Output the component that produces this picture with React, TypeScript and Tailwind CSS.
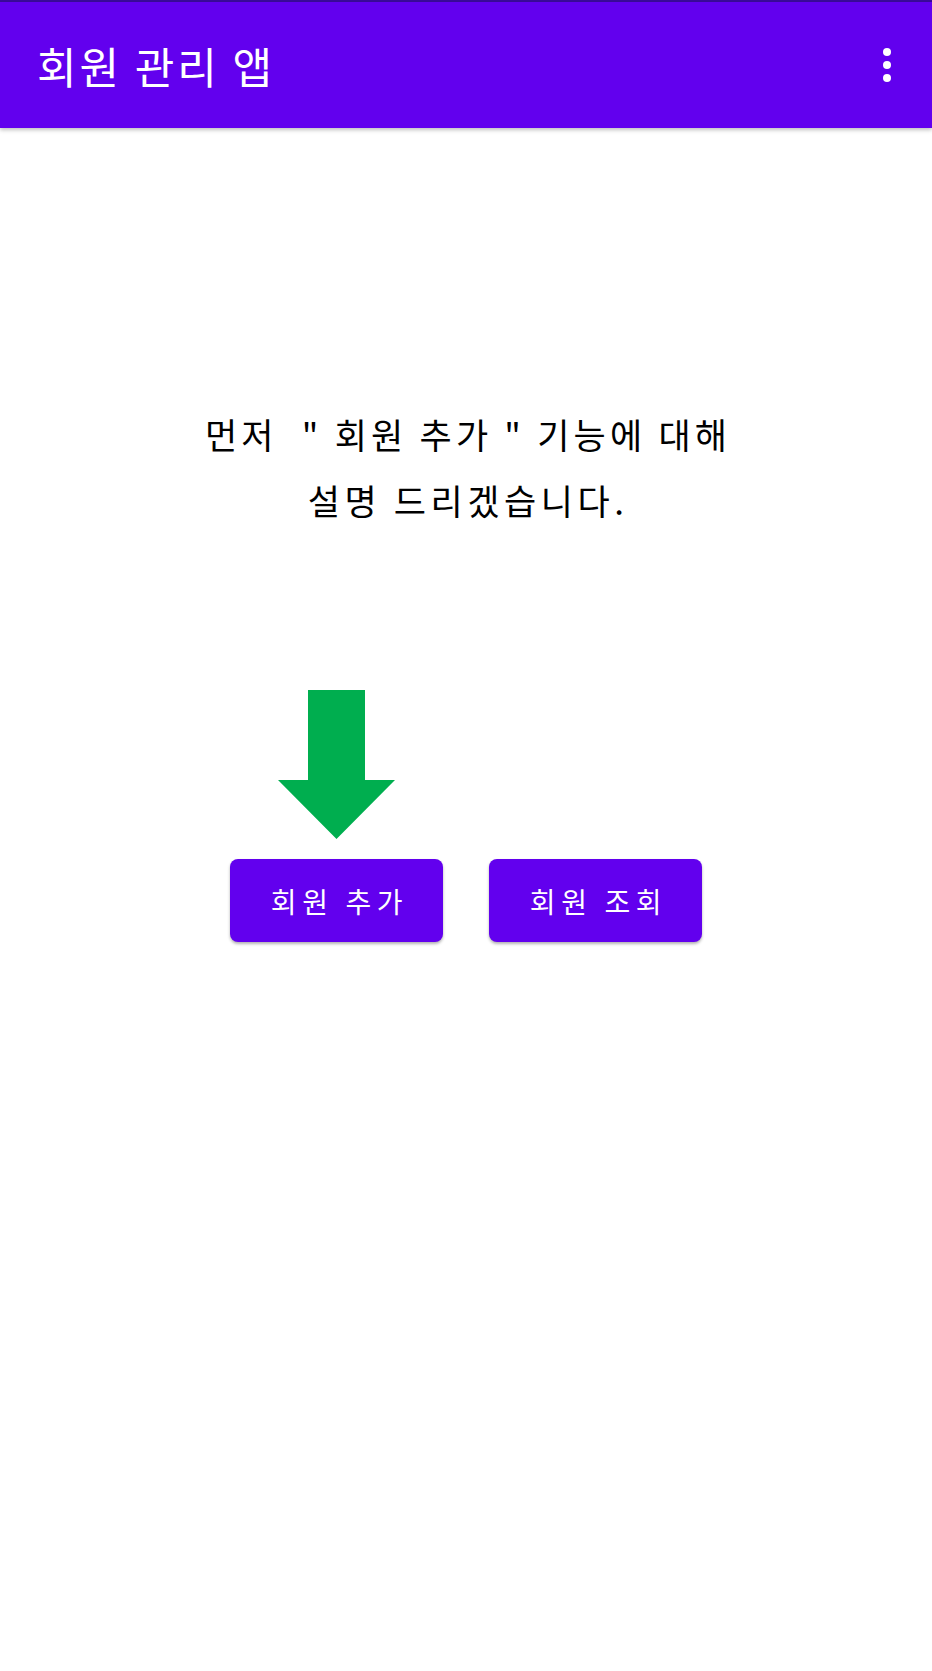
import { useState } from 'react'

const FONT = '"Noto Sans CJK KR", "Noto Sans", sans-serif'

export default function App() {
  const [picked, setPicked] = useState<'add' | 'list' | null>(null)

  return (
    <div className="min-h-[1671px] bg-white" style={{ fontFamily: FONT }}>
      <div className="h-[2px] bg-[#3a0a9a]" />
      <header className="h-[126px] bg-[#6200ee] flex items-center justify-between pl-[37px] pr-[37px] shadow-[0_2px_4px_rgba(0,0,0,0.25)] relative">
        <h1 className="text-[43px] leading-none text-white tracking-[0.07em]">회원 관리 앱</h1>
        <button className="flex flex-col items-center gap-[5px] w-[16px]">
          <span className="w-[8px] h-[8px] rounded-full bg-white" />
          <span className="w-[8px] h-[8px] rounded-full bg-white" />
          <span className="w-[8px] h-[8px] rounded-full bg-white" />
        </button>
      </header>

      <main className="flex flex-col items-center">
        <p className="mt-[273px] pl-[0.12em] text-center text-[35px] leading-[66px] text-black tracking-[0.12em]">
          먼저 &nbsp;" 회원 추가 " 기능에 대해
          <br />
          <span className="tracking-[0.13em]">설명 드리겠습니다.</span>
        </p>

        <div className="mt-[157px] flex gap-[46px]">
          <div className="flex flex-col items-center">
            <svg width="118" height="150" viewBox="0 0 118 150" className="mb-[19px]">
              <path d="M30 0 H87 V90 H117 L58.5 149 L0 90 H30 Z" fill="#00ae4f" />
            </svg>
            <button
              onClick={() => setPicked('add')}
              className="w-[213px] h-[83px] pl-[6px] rounded-[8px] bg-[#6200ee] text-white text-[28px] tracking-[0.2em] shadow-[0_2px_3px_rgba(0,0,0,0.3)]"
            >
              회원 추가
            </button>
          </div>
          <div className="flex flex-col justify-end">
            <button
              onClick={() => setPicked('list')}
              className="w-[213px] h-[83px] pl-[6px] rounded-[8px] bg-[#6200ee] text-white text-[28px] tracking-[0.2em] shadow-[0_2px_3px_rgba(0,0,0,0.3)]"
            >
              회원 조회
            </button>
          </div>
        </div>
        {picked && <span className="sr-only">{picked}</span>}
      </main>
    </div>
  )
}
